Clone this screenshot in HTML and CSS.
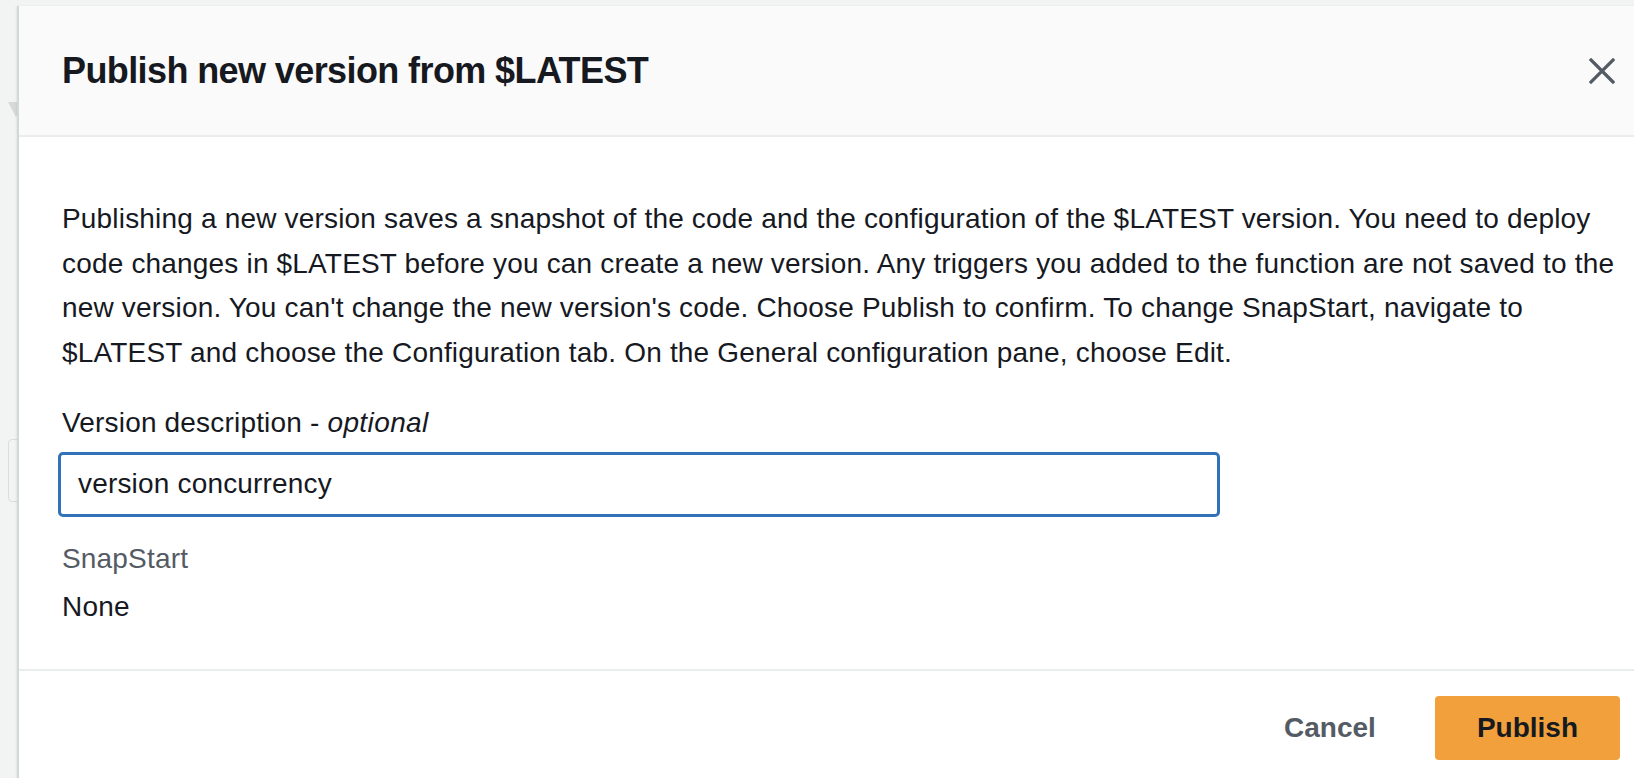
FILE: index.html
```html
<!DOCTYPE html>
<html lang="en">
<head>
<meta charset="utf-8">
<title>Publish new version</title>
<link rel="stylesheet" href="styles.css">
</head>
<body>
<div class="page">
  <div class="bg-caret"></div>
  <div class="bg-box"></div>
  <div class="modal">
    <div class="modal-header">
      <h2 class="modal-title">Publish new version from $LATEST</h2>
      <button class="close-btn" aria-label="Close">
        <svg width="26" height="26" viewBox="0 0 26 26"><path d="M2 2 L24 24 M24 2 L2 24" stroke="#545b64" stroke-width="3.2" stroke-linecap="square" fill="none"/></svg>
      </button>
    </div>
    <div class="modal-body">
      <p class="intro">Publishing a new version saves a snapshot of the code and the configuration of the $LATEST version. You need to deploy<br>code changes in $LATEST before you can create a new version. Any triggers you added to the function are not saved to the<br>new version. You can't change the new version's code. Choose Publish to confirm. To change SnapStart, navigate to<br>$LATEST and choose the Configuration tab. On the General configuration pane, choose Edit.</p>
      <div class="field">
        <label class="field-label">Version description - <i>optional</i></label>
        <div class="input">version concurrency</div>
      </div>
      <div class="kv">
        <div class="kv-key">SnapStart</div>
        <div class="kv-value">None</div>
      </div>
    </div>
    <div class="modal-footer">
      <button class="btn btn-link">Cancel</button>
      <button class="btn btn-primary">Publish</button>
    </div>
  </div>
</div>
</body>
</html>
```

FILE: styles.css
```css
html, body {
  margin: 0;
  padding: 0;
  height: 100%;
  overflow: hidden;
  background: #f2f3f3;
}

body {
  font-family: "Liberation Sans", Arial, sans-serif;
  color: #16191f;
}

.page {
  position: relative;
  padding-top: 6px;
  padding-left: 17px;
  height: 100%;
  box-sizing: border-box;
}

.bg-caret {
  position: absolute;
  left: 8px;
  top: 102px;
  width: 0;
  height: 0;
  border-left: 8px solid transparent;
  border-right: 8px solid transparent;
  border-top: 15px solid #d5d9d9;
}

.bg-box {
  position: absolute;
  left: 8px;
  top: 439px;
  width: 40px;
  height: 61px;
  border: 1px solid #dadede;
  border-radius: 4px;
}

.modal {
  position: relative;
  z-index: 1;
  width: 1645px;
  min-height: 900px;
  box-sizing: border-box;
  background: #ffffff;
  border-left: 2px solid #d3d8d8;
  box-shadow: -1px 0 2px rgba(0, 0, 0, 0.06);
}

.modal-header {
  height: 131px;
  box-sizing: border-box;
  background: #fafafa;
  border-bottom: 2px solid #eaeded;
  display: flex;
  align-items: center;
  justify-content: space-between;
  padding: 0 47px 0 43px;
}

.modal-title {
  margin: 0;
  font-size: 36px;
  line-height: 44px;
  font-weight: 700;
  letter-spacing: -0.6px;
  color: #16191f;
}

.close-btn {
  background: none;
  border: 0;
  padding: 0;
  width: 26px;
  height: 26px;
  display: flex;
  margin-top: 1px;
}

.modal-body {
  padding: 60px 42px 39px 43px;
  font-size: 28px;
  line-height: 44.5px;
  letter-spacing: 0.18px;
}

.intro {
  margin: 0;
  white-space: nowrap;
}

.field {
  margin-top: 26px;
}

.field-label {
  display: block;
}

.field-label i {
  font-style: italic;
  letter-spacing: 0.4px;
}

.input {
  margin-top: 6px;
  margin-left: -4px;
  width: 1162px;
  height: 65px;
  box-sizing: border-box;
  border: 3px solid #3272b9;
  border-radius: 5px;
  padding-left: 17px;
  display: flex;
  align-items: center;
}

.kv {
  margin-top: 20px;
  display: flex;
  flex-direction: column;
  gap: 4px;
}

.kv-key {
  color: #545b64;
}

.modal-footer {
  border-top: 2px solid #eaeded;
  display: flex;
  justify-content: flex-end;
  align-items: center;
  gap: 31px;
  padding: 25px 42px 25px 43px;
}

.btn {
  font-family: "Liberation Sans", Arial, sans-serif;
  font-size: 28px;
  font-weight: 700;
  height: 64px;
  border: 0;
  border-radius: 4px;
  background: none;
}

.btn-link {
  color: #545b64;
  padding: 0 28px;
}

.btn-primary {
  background: #f1a03b;
  color: #16191f;
  padding: 0 42px;
}
```
